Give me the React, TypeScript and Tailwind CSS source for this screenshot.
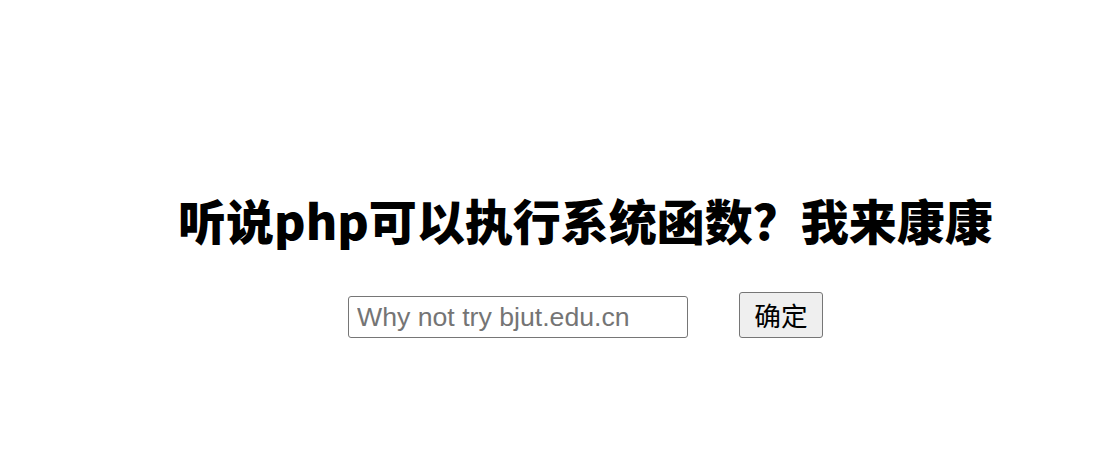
export default function App() {
  return (
    <div className="min-h-[472px] w-full bg-white pl-[73px] pt-[184px] text-black">
      <h1 className="text-center text-[48px] leading-[70px] font-black [font-family:'Noto_Sans_CJK_SC',sans-serif]">
        听说php可以执行系统函数？我来康康
      </h1>
      <form className="mt-[38px] flex items-end justify-center gap-[51px]" onSubmit={(e) => e.preventDefault()}>
        <input
          type="text"
          placeholder="Why not try bjut.edu.cn"
          className="h-[42px] w-[340px] rounded-[3px] border border-[#767676] px-[8px] text-[26.67px] [font-family:'Liberation_Sans',Arial,sans-serif] placeholder:text-[#757575] outline-none"
        />
        <button
          type="submit"
          className="h-[46px] w-[84px] rounded-[3px] border border-[#767676] bg-[#efefef] text-[26.67px] leading-none [font-family:'Noto_Sans_CJK_SC',sans-serif]"
        >
          确定
        </button>
      </form>
    </div>
  );
}
